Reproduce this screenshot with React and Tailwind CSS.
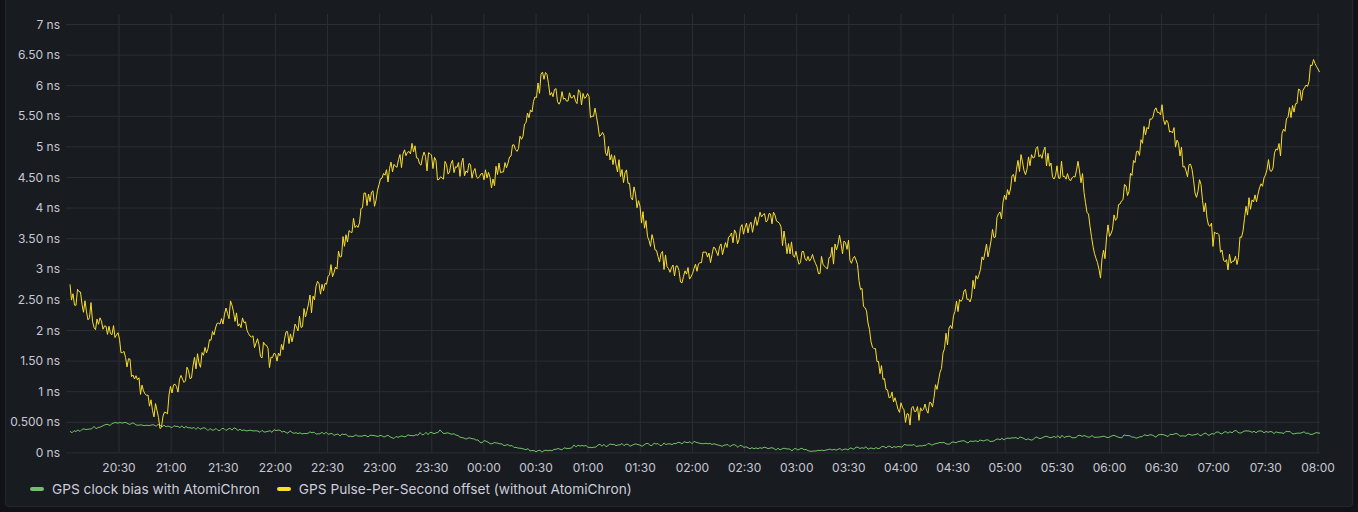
import React from "react";

const Y0 = 453, SC = 61.3, X0 = 66, X1 = 1320;
const yw = [[66,283],[80,300],[95,322],[110,330],[120,345],[135,380],[150,400],[160,420],[172,392],[185,375],[200,360],[215,335],[230,312],[245,330],[260,340],[275,360],[290,335],[305,315],[320,285],[335,262],[350,235],[365,205],[380,195],[392,165],[410,145],[425,160],[440,175],[455,165],[470,172],[490,185],[505,165],[520,140],[532,118],[543,72],[552,95],[565,105],[585,95],[600,125],[615,160],[630,190],[645,225],[660,255],[680,282],[700,262],[720,245],[740,232],[765,218],[790,245],[810,255],[825,270],[840,242],[852,255],[862,290],[872,345],[888,395],[905,415],[918,420],[932,405],[945,345],[960,300],[975,280],[990,240],[1005,200],[1020,165],[1040,150],[1055,175],[1070,165],[1080,170],[1090,225],[1100,275],[1108,235],[1120,205],[1132,180],[1142,140],[1158,105],[1170,125],[1185,165],[1200,190],[1212,230],[1225,258],[1235,262],[1245,215],[1260,185],[1275,160],[1290,120],[1305,85],[1314,65],[1320,70]];
const gw = [[70,432],[120,423],[170,427],[250,431],[330,434],[400,437],[440,432],[480,441],[540,451],[580,446],[620,445],[700,443],[760,448],[820,450],[880,448],[950,443],[1050,437],[1150,436],[1250,432],[1310,433],[1320,434]];

function interp(w, x) {
  for (let i = 0; i < w.length - 1; i++) {
    if (x >= w[i][0] && x <= w[i + 1][0]) {
      const t = (x - w[i][0]) / (w[i + 1][0] - w[i][0]);
      return w[i][1] + t * (w[i + 1][1] - w[i][1]);
    }
  }
  return w[w.length - 1][1];
}
function rng(seed) {
  let s = seed;
  return () => { s = (s * 1103515245 + 12345) % 2147483648; return s / 2147483648; };
}
function series(w, step, amp, seed, x0) {
  const r = rng(seed);
  const pts = [];
  let walk = 0;
  for (let x = x0; x <= X1; x += step) {
    walk = walk * 0.8 + (r() - 0.5) * amp * 0.6;
    const y = interp(w, x) + walk + (r() - 0.5) * 2 * amp;
    pts.push(`${x.toFixed(1)},${y.toFixed(1)}`);
  }
  return pts.join(" ");
}
const yellow = series(yw, 1.5, 10, 7, 70);
const green = series(gw, 2, 1.4, 3, 70);

const yLabels = ["7 ns","6.50 ns","6 ns","5.50 ns","5 ns","4.50 ns","4 ns","3.50 ns","3 ns","2.50 ns","2 ns","1.50 ns","1 ns","0.500 ns","0 ns"];
const xLabels = ["20:30","21:00","21:30","22:00","22:30","23:00","23:30","00:00","00:30","01:00","01:30","02:00","02:30","03:00","03:30","04:00","04:30","05:00","05:30","06:00","06:30","07:00","07:30","08:00"];

export default function App() {
  return (
    <div className="h-[512px] w-[1358px] bg-[#111217] px-[5px] pb-[5px]" style={{ fontFamily: "Inter, 'Liberation Sans', sans-serif" }}>
      <div className="h-full bg-[#181b1f] border border-t-0 border-[#24262b] rounded-b-sm flex flex-col">
        <svg width="1346" height="478" viewBox="6 0 1346 478" className="block">
          {yLabels.map((l, i) => {
            const y = 24.5 + i * 30.6;
            return (
              <g key={l}>
                <line x1={X0} x2={X1} y1={y} y2={y} stroke="#2c2e33" strokeWidth="1" />
                <text x="60" y={y + 4} textAnchor="end" fontSize="12" fill="#c7c7d4">{l}</text>
              </g>
            );
          })}
          {xLabels.map((l, i) => {
            const x = 119 + i * 52.13;
            return (
              <g key={l}>
                <line x1={x} x2={x} y1="14" y2="453" stroke="#2c2e33" strokeWidth="1" />
                <text x={x} y="472" textAnchor="middle" fontSize="12" fill="#c7c7d4">{l}</text>
              </g>
            );
          })}
          <polyline points={green} fill="none" stroke="#73bf69" strokeWidth="1" />
          <polyline points={yellow} fill="none" stroke="#fade2a" strokeWidth="1" strokeLinejoin="round" />
        </svg>
        <div className="flex items-center gap-[17px] pl-[24px] text-[13.7px] text-[#ccccdc] h-[22px]">
          <div className="flex items-center gap-[8px]">
            <span className="w-[14px] h-[4px] rounded-sm bg-[#73bf69]" />
            <span>GPS clock bias with AtomiChron</span>
          </div>
          <div className="flex items-center gap-[8px]">
            <span className="w-[14px] h-[4px] rounded-sm bg-[#fade2a]" />
            <span>GPS Pulse-Per-Second offset (without AtomiChron)</span>
          </div>
        </div>
      </div>
    </div>
  );
}
